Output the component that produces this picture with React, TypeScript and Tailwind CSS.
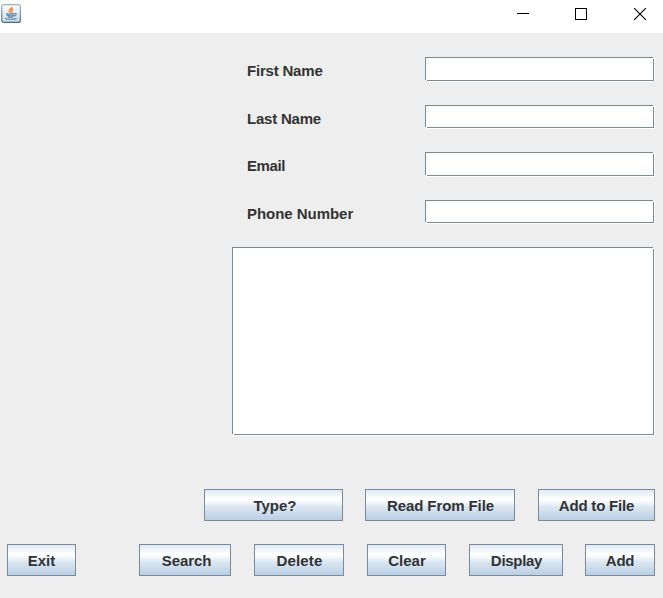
import React from "react";

const fields = [
  { label: "First Name", row: "h-6 mb-6", text: "tracking-[-0.2px]" },
  { label: "Last Name", row: "h-[23px] mb-6", text: "tracking-[-0.22px]" },
  { label: "Email", row: "h-6 mb-6", text: "tracking-[-0.4px]" },
  { label: "Phone Number", row: "h-[23px] mb-6", text: "tracking-[-0.04px]" },
];

function MetalButton({ label, className }: { label: string; className: string }) {
  return (
    <button
      type="button"
      className={`h-8 shrink-0 whitespace-nowrap border border-[#7a8a99] bg-[linear-gradient(to_bottom,#dfe9f4_0%,#ffffff_30%,#fcfdfe_36%,#dce7f2_56%,#b9cfe4_100%)] pt-0.5 text-center leading-7 ${className}`}
    >
      {label}
    </button>
  );
}

/* The etched border leaves a gap at the lower left and upper right corners. */
function Notches() {
  return (
    <>
      <span className="absolute bottom-0 left-0 h-px w-0.5 bg-[linear-gradient(to_right,#eeeeee_50%,#ffffff_50%)]" />
      <span className="absolute right-0 top-0 h-0.5 w-px bg-[linear-gradient(to_bottom,#eeeeee_50%,#ffffff_50%)]" />
    </>
  );
}

function JavaIcon() {
  return (
    <svg width="20" height="19" viewBox="0 0 20 19" className="shrink-0" fill="none">
      <defs>
        <linearGradient id="tile" x1="0" y1="0" x2="0" y2="1">
          <stop offset="0" stopColor="#ffffff" />
          <stop offset="0.5" stopColor="#e4ebf1" />
          <stop offset="1" stopColor="#c4d4e1" />
        </linearGradient>
        <linearGradient id="edge" x1="0" y1="0" x2="0" y2="1">
          <stop offset="0" stopColor="#9fb2c2" />
          <stop offset="1" stopColor="#486d8e" />
        </linearGradient>
      </defs>
      <rect x="0.7" y="0.6" width="18.6" height="17.8" rx="2" fill="url(#tile)" stroke="url(#edge)" strokeWidth="1.2" />
      <path d="M10.8 3c.6 1.9-2.9 2.3-2.5 4.2.1.7 1 1.1 1.5 1.8M12.2 5c-2 .9-2.3 1.6-1.3 2.7.4.5.1 1.1-.4 1.5" stroke="#f0883a" strokeWidth="1.5" />
      <path d="M5.2 9.6c1.8.5 6.5.5 8.3 0M5.8 11.2c1.8.5 5.6.5 7.1 0M6.6 12.7c1.5.5 4.3.5 5.6 0M13.2 9.7c3-.6 2.6 2-.4 2.4" stroke="#5c88aa" strokeWidth="1.2" />
      <path d="M4 14.6c1.5.8 9 .9 11.5-.2" stroke="#5c88aa" strokeWidth="1.1" />
    </svg>
  );
}

export default function App() {
  return (
    <div className="flex h-[598px] w-[663px] flex-col overflow-hidden bg-[#eeeeee] font-['Liberation_Sans',Arial,sans-serif] text-[15px] font-bold text-[#333333]">
      <header className="flex h-[33px] shrink-0 items-start justify-between bg-white pl-px pr-[17px] pt-1">
        <JavaIcon />
        <div className="flex pt-1">
          <svg className="mr-[46px]" width="12" height="12" viewBox="0 0 12 12" shapeRendering="crispEdges">
            <path d="M0 5h12v1H0z" fill="#000" />
          </svg>
          <svg className="mr-[47px]" width="12" height="12" viewBox="0 0 12 12" shapeRendering="crispEdges">
            <path d="M.5.5h11v11H.5z" fill="none" stroke="#000" />
          </svg>
          <svg width="12" height="12" viewBox="0 0 12 12">
            <path d="M0 0l12 12M12 0L0 12" stroke="#000" strokeWidth="1.1" />
          </svg>
        </div>
      </header>
      <main className="flex flex-col pt-6">
        {fields.map((f) => (
          <label key={f.label} className={`flex items-start pl-[247px] ${f.row}`}>
            <span className={`w-[178px] shrink-0 pt-[5px] leading-[18px] ${f.text}`}>{f.label}</span>
            <span className="relative block h-full w-[229px] shadow-[1px_1px_0_#ffffff]">
              <input className="block h-full w-full border border-[#7a8a99] bg-white outline-none" />
              <Notches />
            </span>
          </label>
        ))}
        <div className="relative ml-[232px] h-[188px] w-[422px] shadow-[1px_1px_0_#ffffff]">
          <textarea className="block h-full w-full resize-none border border-[#7a8a99] bg-white outline-none" />
          <Notches />
        </div>
        <div className="mt-[54px] flex pl-[204px]">
          <MetalButton label="Type?" className="mr-[22px] w-[139px] pl-[3px]" />
          <MetalButton label="Read From File" className="mr-[23px] w-[150px] pl-px tracking-[-0.1px]" />
          <MetalButton label="Add to File" className="w-[117px] tracking-[-0.2px]" />
        </div>
        <div className="mt-[23px] flex pl-[7px]">
          <MetalButton label="Exit" className="mr-[63px] w-[69px]" />
          <MetalButton label="Search" className="mr-[23px] w-[92px] pl-[3px] tracking-[-0.1px]" />
          <MetalButton label="Delete" className="mr-[23px] w-[90px] pl-px tracking-[0.2px]" />
          <MetalButton label="Clear" className="mr-[23px] w-[79px] pl-px" />
          <MetalButton label="Display" className="mr-[22px] w-[94px] pl-px tracking-[-0.3px]" />
          <MetalButton label="Add" className="w-[70px] tracking-[-0.3px]" />
        </div>
      </main>
    </div>
  );
}
